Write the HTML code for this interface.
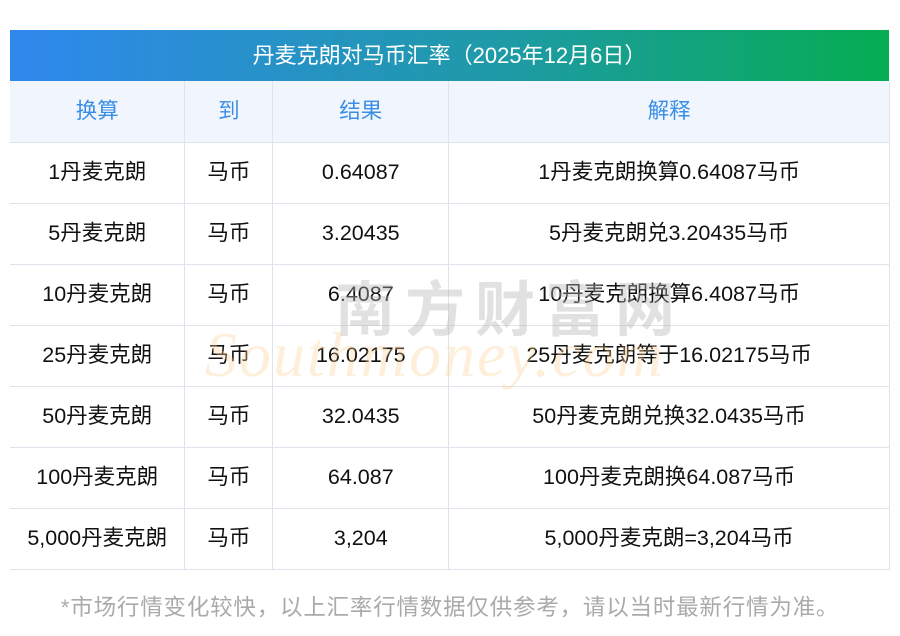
<!DOCTYPE html>
<html><head><meta charset="utf-8"><style>
*{margin:0;padding:0;box-sizing:border-box}
body{width:900px;height:636px;background:#fff;font-family:"Liberation Sans","Noto Sans CJK SC",sans-serif;position:relative;overflow:hidden}
.title{position:absolute;left:10px;top:30px;width:879px;height:51px;background:linear-gradient(90deg,#2f88ee,#1f9aa8 55%,#05ad52);color:#fff;font-size:22px;line-height:51px;text-align:center}
table{position:absolute;left:10px;top:81px;width:880px;border-collapse:collapse;z-index:2}
td,th{border:1px solid #dfe3ec;text-align:center;font-size:21.5px;color:#111;font-weight:normal;height:61px;padding:0;line-height:59px;vertical-align:middle;white-space:nowrap}
th{background:#f1f6fe;color:#3a8ee6;border-top:none}
tr td:first-child,tr th:first-child{border-left:none}
.wm{position:absolute;z-index:3;pointer-events:none}
.foot{position:absolute;left:0;width:900px;top:590px;text-align:center;font-size:22.5px;letter-spacing:0.8px;color:#aaa;white-space:nowrap}
</style></head><body>
<div class="title">丹麦克朗对马币汇率（2025年12月6日）</div>
<table>
<colgroup><col style="width:175px"><col style="width:88px"><col style="width:176px"><col style="width:441px"></colgroup>
<tr><th>换算</th><th>到</th><th>结果</th><th>解释</th></tr>
<tr><td>1丹麦克朗</td><td>马币</td><td>0.64087</td><td>1丹麦克朗换算0.64087马币</td></tr>
<tr><td>5丹麦克朗</td><td>马币</td><td>3.20435</td><td>5丹麦克朗兑3.20435马币</td></tr>
<tr><td>10丹麦克朗</td><td>马币</td><td>6.4087</td><td>10丹麦克朗换算6.4087马币</td></tr>
<tr><td>25丹麦克朗</td><td>马币</td><td>16.02175</td><td>25丹麦克朗等于16.02175马币</td></tr>
<tr><td>50丹麦克朗</td><td>马币</td><td>32.0435</td><td>50丹麦克朗兑换32.0435马币</td></tr>
<tr><td>100丹麦克朗</td><td>马币</td><td>64.087</td><td>100丹麦克朗换64.087马币</td></tr>
<tr><td>5,000丹麦克朗</td><td>马币</td><td>3,204</td><td>5,000丹麦克朗=3,204马币</td></tr>
</table>
<div class="wm" style="left:335px;top:262px;font-size:60px;letter-spacing:10px;color:rgba(180,180,180,0.4);font-weight:bold">南方财富网</div>
<div class="wm" style="left:205px;top:318px;font-size:64px;font-family:'Liberation Serif',serif;font-style:italic;color:rgba(252,210,150,0.35);letter-spacing:2px">Southmoney.com</div>
<div class="foot">*市场行情变化较快，以上汇率行情数据仅供参考，请以当时最新行情为准。</div>
</body></html>
